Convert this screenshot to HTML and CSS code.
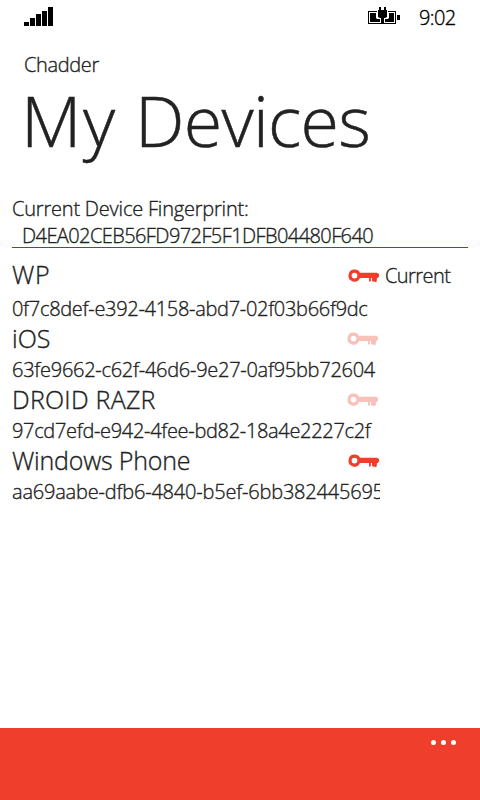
FILE: index.html
```
<!DOCTYPE html>
<html lang="en">
<head>
<meta charset="utf-8">
<title>My Devices</title>
<link rel="stylesheet" href="styles.css">
</head>
<body>
<svg width="0" height="0" class="defs">
  <symbol id="key" viewBox="0 0 31 14">
    <path fill="currentColor" fill-rule="evenodd" d="M6.5 .6a6 6 0 0 1 5.5 3.2H29l2 1.2v2.4L29.8 9H29l-.4 3.8-1.6.5-.8-1-1 .5-1.2-1V9h-1.2v3.6H21V9h-9A6 6 0 1 1 6.5 .6Zm0 3.1a2.8 2.8 0 1 0 0 5.7 2.8 2.8 0 0 0 0-5.7Z"/>
  </symbol>
</svg>
<div class="phone">
  <header class="status">
    <svg class="signal" width="29" height="19" viewBox="0 0 29 19"><path d="M0 15h5v4H0zM6 11h5v8H6zM12 7h5v12h-5zM18 4h5v15h-5zM24 0h5v19h-5z"/></svg>
    <svg class="battery" width="32" height="17" viewBox="0 0 32 17"><path d="M0 4h9v1H1v11h12v1H0zM20 4h8v13H16v-1h11V5h-7zM2 6h6v5l1 1h3v3H2zM21 6h5v9h-9v-3h3l1-1zM29 8h3v5h-3z"/><path d="M11 0h2v3h3V0h2v3h1v7l-2 1h-1v6h-3v-6h-1l-2-1V3h1z"/></svg>
    <span class="clock">9:02</span>
  </header>
  <div class="app">Chadder</div>
  <h1><span class="my">My</span> <span class="dev">Devices</span></h1>
  <main>
    <div class="label">Current Device Fingerprint:</div>
    <div class="fingerprint">D4EA02CEB56FD972F5F1DFB04480F640</div>
    <section class="device first">
      <div class="row"><span class="name wp">WP</span><svg class="key"><use href="#key"/></svg><span class="current">Current</span></div>
      <div class="id id1">0f7c8def-e392-4158-abd7-02f03b66f9dc</div>
    </section>
    <section class="device">
      <div class="row"><span class="name ios">iOS</span><svg class="key faded"><use href="#key"/></svg></div>
      <div class="id id2">63fe9662-c62f-46d6-9e27-0af95bb72604</div>
    </section>
    <section class="device">
      <div class="row"><span class="name droid">DROID RAZR</span><svg class="key faded"><use href="#key"/></svg></div>
      <div class="id id3">97cd7efd-e942-4fee-bd82-18a4e2227c2f</div>
    </section>
    <section class="device">
      <div class="row"><span class="name win">Windows Phone</span><svg class="key"><use href="#key"/></svg></div>
      <div class="id id4">aa69aabe-dfb6-4840-b5ef-6bb382445695</div>
    </section>
  </main>
  <footer><i></i><i></i><i></i></footer>
</div>
</body>
</html>
```
FILE: styles.css
```
* { box-sizing: border-box; }
body { margin: 0; background: #fff; }
.defs { display: block; }
.phone {
  width: 480px; height: 800px; overflow: hidden;
  display: flex; flex-direction: column;
  font-family: "Open Sans", "Noto Sans", sans-serif;
  font-size: 20px; font-weight: 300; color: #222; white-space: nowrap;
  -webkit-text-stroke: 0.35px currentColor;
  background: #fff;
}
.status { height: 32px; display: flex; align-items: flex-start; padding: 7px 0 0 24px; color: #000; flex: none; }
.battery { margin-left: 315px; }
.clock { margin-left: 19px; line-height: 21px; letter-spacing: -0.6px; }
.app { margin-left: 24px; padding-top: 18px; height: 54px; line-height: 30px; letter-spacing: -0.35px; flex: none; }
h1 { margin: 0 0 0 21px; height: 108px; line-height: 68px; font-size: 70px; font-weight: 300; -webkit-text-stroke-width: 0.5px; flex: none; }
.my { letter-spacing: 1.6px; }
.dev { letter-spacing: -0.7px; }
main { flex: 1; padding: 0 12px; }
.label { height: 28px; line-height: 30px; letter-spacing: -0.2px; }
.fingerprint { height: 26px; line-height: 28px; padding-left: 10px; border-bottom: 1px solid #e51400; letter-spacing: -0.58px; }
.device { height: 61px; }
.first { height: 75px; padding-top: 10px; }
.row { display: flex; align-items: center; height: 31px; line-height: 31px; }
.first .row { height: 36px; line-height: 38px; }
.name { width: 336px; font-size: 25px; letter-spacing: 0; }
.first .wp { line-height: 32px; margin-top: -4px; letter-spacing: 0.6px; }
.droid { letter-spacing: 0.25px; }
.win { letter-spacing: -0.2px; }
.key { width: 31px; height: 14px; color: #f03e2d; }
.faded { opacity: .32; margin-left: -1px; }
.current { margin-left: 6px; letter-spacing: -0.55px; }
.id { width: 368px; height: 30px; line-height: 31px; overflow: hidden; }
.first .id { line-height: 30px; }
.id1 { letter-spacing: -0.3px; }
.id2 { letter-spacing: -0.27px; }
.id3 { letter-spacing: -0.32px; }
.id4 { letter-spacing: -0.2px; }
footer { height: 72px; background: #f03e2d; display: flex; justify-content: flex-end; gap: 5px; padding: 12px 24px 0 0; flex: none; }
footer i { width: 5px; height: 5px; border-radius: 50%; background: #fff; }
```
